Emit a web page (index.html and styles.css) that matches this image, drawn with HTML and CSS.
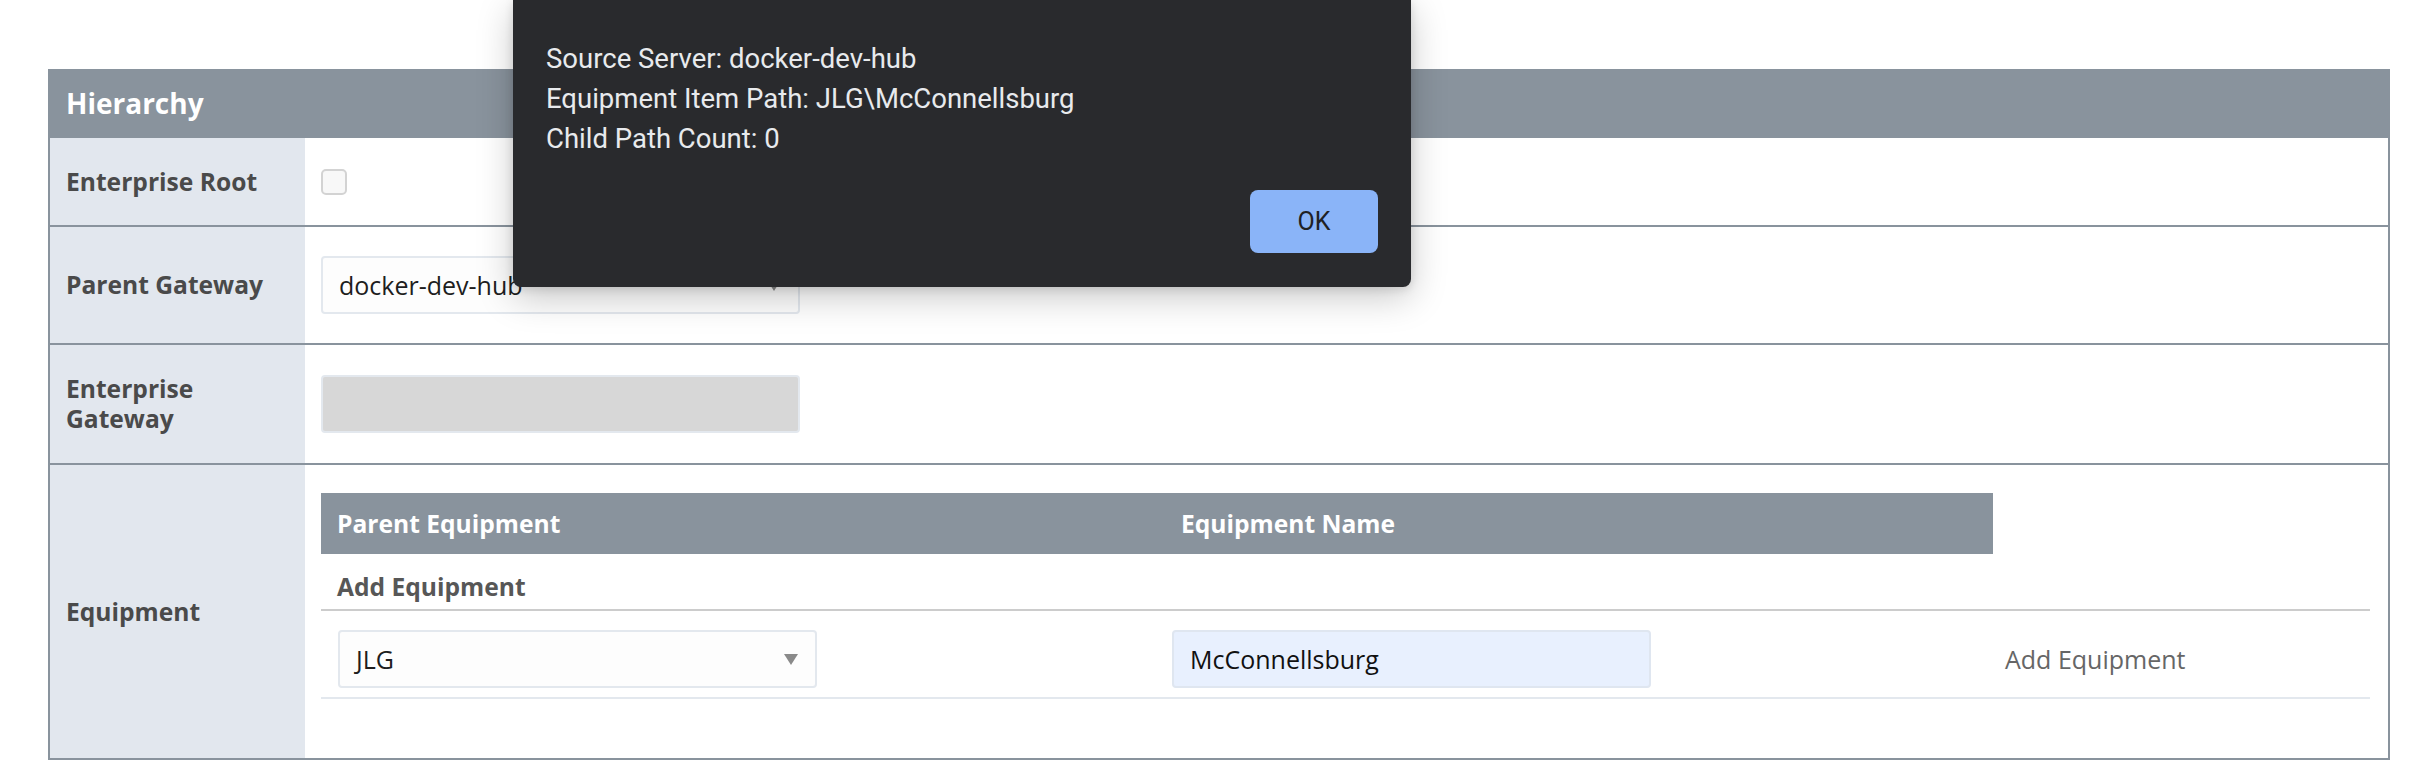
FILE: index.html
```html
<!DOCTYPE html>
<html lang="en">
<head>
<meta charset="utf-8">
<title>Hierarchy</title>
<link rel="stylesheet" href="styles.css">
</head>
<body>
<div class="panel">
  <div class="panel-head">Hierarchy</div>

  <div class="row row-root">
    <div class="label">Enterprise Root</div>
    <div class="value"><input type="checkbox" class="check"></div>
  </div>

  <div class="row row-field">
    <div class="label">Parent Gateway</div>
    <div class="value">
      <div class="select"><span class="select-text">docker-dev-hub</span><span class="caret"></span></div>
    </div>
  </div>

  <div class="row row-field row-eg">
    <div class="label">Enterprise Gateway</div>
    <div class="value">
      <div class="textbox disabled"></div>
    </div>
  </div>

  <div class="row row-equip">
    <div class="label">Equipment</div>
    <div class="value value-equip">
      <div class="sub">
        <div class="sub-head">
          <div class="sub-th th-parent">Parent Equipment</div>
          <div class="sub-th th-name">Equipment Name</div>
          <div class="sub-th th-empty"></div>
        </div>
        <div class="sub-add">Add Equipment</div>
        <div class="sub-row">
          <div class="cell cell-parent">
            <div class="select select-jlg"><span class="select-text">JLG</span><span class="caret"></span></div>
          </div>
          <div class="cell cell-name">
            <div class="textbox autofill">McConnellsburg</div>
          </div>
          <div class="cell cell-action"><span class="action-link">Add Equipment</span></div>
        </div>
      </div>
    </div>
  </div>
</div>

<div class="dialog">
  <div class="dialog-msg">
    <div class="dialog-line">Source Server: docker-dev-hub</div>
    <div class="dialog-line">Equipment Item Path: JLG\McConnellsburg</div>
    <div class="dialog-line">Child Path Count: 0</div>
  </div>
  <div class="dialog-actions"><button class="ok-btn">OK</button></div>
</div>
</body>
</html>
```
FILE: styles.css
```css
html, body {
  margin: 0;
  padding: 0;
  background: #ffffff;
}

body {
  font-family: "Open Sans", "Noto Sans", sans-serif;
  color: #222222;
  width: 2412px;
  height: 764px;
  overflow: hidden;
}

.panel {
  margin: 69px 22px 0 48px;
  border: 2px solid #89939d;
  border-top: 0;
}

.panel-head {
  margin: 0 -2px;
  height: 69px;
  background: #89939d;
  color: #ffffff;
  font-weight: 700;
  font-size: 28px;
  line-height: 69px;
  padding-left: 18px;
}

.row {
  display: grid;
  grid-template-columns: 255px 1fr;
  border-bottom: 2px solid #89939d;
}

.row-equip {
  border-bottom: 0;
}

.label {
  background: #e2e7ee;
  color: #4a4a4a;
  font-weight: 700;
  font-size: 24.6px;
  line-height: 30px;
  padding: 0 16px;
  display: flex;
  align-items: center;
}

.value {
  padding: 0 18px 0 16px;
  display: flex;
  align-items: center;
}

.row-root {
  height: 87px;
}

.row-field .value {
  padding-top: 29px;
  padding-bottom: 29px;
}

.row-eg .value {
  padding-top: 30px;
  padding-bottom: 30px;
}

.check {
  appearance: none;
  -webkit-appearance: none;
  margin: 0;
  width: 26px;
  height: 26px;
  box-sizing: border-box;
  border: 2px solid #d3d3d3;
  border-radius: 5px;
  background: #f8f8f8;
}

.select,
.textbox {
  box-sizing: border-box;
  width: 479px;
  height: 58px;
  border: 2px solid #e3e8ee;
  border-radius: 4px;
  background: #fdfdfd;
  display: flex;
  align-items: center;
  padding: 0 16px;
  font-size: 25px;
  color: #1e1e1e;
}

.select {
  justify-content: space-between;
  padding-right: 17px;
}

.caret {
  width: 0;
  height: 0;
  border-left: 7.5px solid transparent;
  border-right: 7.5px solid transparent;
  border-top: 11px solid #8a8a8a;
}

.textbox.disabled {
  background: #d7d7d7;
}

.textbox.autofill {
  background: #e8f0fe;
  border-color: #dfe6f0;
  color: #111111;
}

.value-equip {
  display: block;
  padding-top: 28px;
  padding-bottom: 59px;
}

.sub-head,
.sub-row {
  display: grid;
  grid-template-columns: 843px 829px 1fr;
}

.sub-head {
  height: 61px;
}

.sub-th {
  background: #89939d;
  color: #ffffff;
  font-weight: 700;
  font-size: 24.6px;
  line-height: 61px;
}

.th-parent {
  padding-left: 16px;
}

.th-name {
  padding-left: 17px;
}

.th-empty {
  background: transparent;
}

.sub-add {
  height: 57px;
  box-sizing: border-box;
  padding: 16px 0 0 16px;
  line-height: 34px;
  font-weight: 700;
  font-size: 24.6px;
  color: #575757;
  border-bottom: 2px solid #cccccc;
}

.sub-row {
  height: 88px;
  box-sizing: border-box;
  border-bottom: 2px solid #e3e8ee;
  align-items: center;
  padding-top: 10px;
}

.cell-parent {
  padding-left: 17px;
}

.cell-name {
  padding-left: 8px;
}

.cell-action {
  padding-left: 12px;
}

.action-link {
  font-size: 25px;
  color: #666666;
}

.dialog {
  position: absolute;
  left: 513px;
  top: 0;
  width: 898px;
  box-sizing: border-box;
  padding: 39px 33px 34px 33px;
  background: #292a2d;
  border-radius: 0 0 8px 8px;
  box-shadow: 0 10px 36px rgba(0, 0, 0, 0.22), 0 2px 10px rgba(0, 0, 0, 0.12);
  font-family: Roboto, "Liberation Sans", sans-serif;
}

.dialog-line {
  font-size: 27.5px;
  line-height: 40px;
  color: #e8eaed;
}

.dialog-actions {
  display: flex;
  justify-content: flex-end;
  margin-top: 31px;
}

.ok-btn {
  width: 128px;
  height: 63px;
  border: 0;
  border-radius: 8px;
  background: #8ab4f8;
  color: #202124;
  font-family: Roboto, "Liberation Sans", sans-serif;
  font-size: 25px;
  font-weight: 400;
  padding: 0;
}
```
